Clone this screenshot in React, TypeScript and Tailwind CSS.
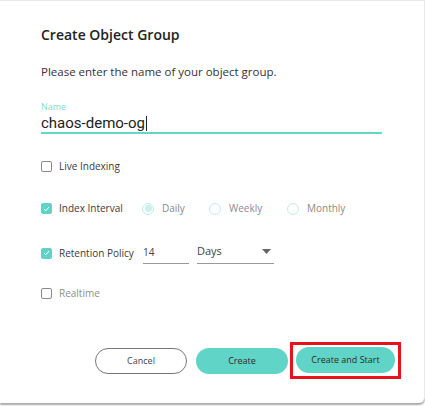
function Check({ checked, label, muted }: { checked: boolean; label: string; muted?: boolean }) {
  return (
    <div className="flex items-center gap-[7px]">
      {checked ? (
        <span className="flex h-[11px] w-[11px] items-center justify-center rounded-[2px] bg-[#5fd3c6]">
          <svg width="7" height="6" viewBox="0 0 7 6" fill="none">
            <path d="M1 3l1.8 1.8L6 1" stroke="white" strokeWidth="1" />
          </svg>
        </span>
      ) : (
        <span className="h-[11px] w-[11px] rounded-[2px] border border-[#8a8a8a] bg-white" />
      )}
      <span className={`text-[10px] ${muted ? "text-[#8d8d8d]" : "text-[#3a3a3a]"}`}>{label}</span>
    </div>
  );
}

function Radio({ selected, label }: { selected?: boolean; label: string }) {
  return (
    <div className="flex items-center gap-[8px]">
      <span className="flex h-[12px] w-[12px] items-center justify-center rounded-full border border-[#bfeeea]">
        {selected && <span className="h-[7px] w-[7px] rounded-full bg-[#c9f1ed]" />}
      </span>
      <span className="text-[10px] text-[#8a8a8a]">{label}</span>
    </div>
  );
}

export default function App() {
  return (
    <div className="h-[406px] w-[425px] bg-white" style={{ fontFamily: '"Open Sans", "Noto Sans", sans-serif' }}>
      <div className="flex h-[403px] flex-col rounded-br-[6px] border-r border-t border-[#e8e8e8] bg-white pl-[41px] pr-[42px] pt-[23px] shadow-[0_2px_2px_rgba(0,0,0,0.35)]">
        <h1 className="text-[14px] font-semibold text-[#222]">Create Object Group</h1>
        <p className="mt-[18px] text-[11.5px] text-[#333]">Please enter the name of your object group.</p>

        <div className="mt-[21px]">
          <label className="block text-[9px] leading-[12px] text-[#7fdcd5]">Name</label>
          <div className="mt-px flex items-center border-b-2 border-[#64d6ca]">
            <span className="text-[15px] leading-[18px] text-[#222]" style={{ fontFamily: "Roboto, sans-serif" }}>
              chaos-demo-og
            </span>
            <span className="ml-[1px] h-[15px] w-px bg-[#222]" />
          </div>
        </div>

        <div className="mt-[25px]">
          <Check checked={false} label="Live Indexing" />
        </div>

        <div className="mt-[27px] flex items-center">
          <div className="w-[101px]">
            <Check checked label="Index Interval" />
          </div>
          <div className="flex items-center">
            <div className="w-[67px]">
              <Radio selected label="Daily" />
            </div>
            <div className="w-[78px]">
              <Radio label="Weekly" />
            </div>
            <Radio label="Monthly" />
          </div>
        </div>

        <div className="mt-[27px] flex items-end">
          <div className="mb-[3px] w-[102px]">
            <Check checked label="Retention Policy" />
          </div>
          <div className="w-[46px] border-b border-[#999] pb-[3px] text-[10px] text-[#444]">14</div>
          <div className="ml-[8px] flex w-[77px] items-center justify-between border-b border-[#999] pb-[3px]">
            <span className="text-[11px] text-[#444]">Days</span>
            <svg width="9" height="5" viewBox="0 0 9 5" className="mr-[3px]">
              <path d="M0 0h9L4.5 5z" fill="#666" />
            </svg>
          </div>
        </div>

        <div className="mt-[22px]">
          <Check checked={false} label="Realtime" muted />
        </div>

        <div className="mt-auto mb-[24px] -mr-[20px] flex items-center pl-[54px]">
          <button className="h-[26px] w-[92px] shrink-0 rounded-full border border-[#777] bg-white text-[9px] text-[#444]">
            Cancel
          </button>
          <button className="ml-[9px] h-[26px] w-[92px] shrink-0 rounded-full bg-[#61d4c8] text-[9px] text-[#2a2a2a]">
            Create
          </button>
          <div className="ml-[2px] shrink-0 border-[3px] border-[#e8141c] px-[3px] pb-[3px] pt-[2px]">
            <button className="block h-[26px] w-[99px] rounded-full bg-[#61d4c8] text-[9px] text-[#2a2a2a]">
              Create and Start
            </button>
          </div>
        </div>
      </div>
    </div>
  );
}
